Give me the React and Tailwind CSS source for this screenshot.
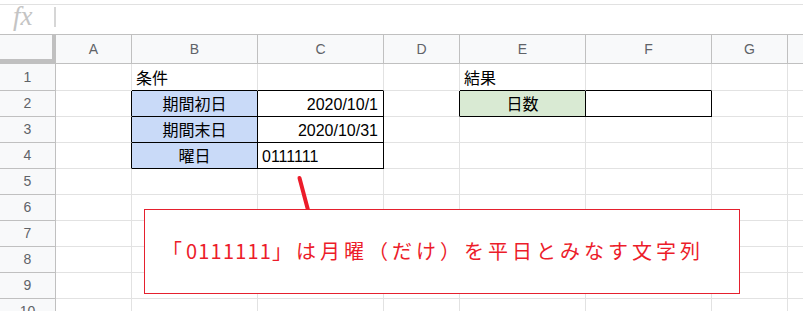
import React from "react";

const cols = [
  { key: "A", w: "w-[76px]" },
  { key: "B", w: "w-[126px]" },
  { key: "C", w: "w-[126px]" },
  { key: "D", w: "w-[76px]" },
  { key: "E", w: "w-[126px]" },
  { key: "F", w: "w-[126px]" },
  { key: "G", w: "w-[76px]" },
  { key: "H", w: "w-[40px]", hide: true },
];

const rowHeights = ["h-[27px]", "h-[26px]", "h-[26px]", "h-[26px]", "h-[26px]", "h-[26px]", "h-[26px]", "h-[26px]", "h-[26px]", "h-[26px]"];

// cell content and styling, keyed by "B2" etc.
const cells = {
  B1: { text: "条件" },
  E1: { text: "結果" },
  B2: { text: "期間初日", align: "center", bg: "bg-[#c9daf8]" },
  C2: { text: "2020/10/1", align: "right" },
  B3: { text: "期間末日", align: "center", bg: "bg-[#c9daf8]" },
  C3: { text: "2020/10/31", align: "right" },
  B4: { text: "曜日", align: "center", bg: "bg-[#c9daf8]" },
  C4: { text: "0111111" },
  E2: { text: "日数", align: "center", bg: "bg-[#d9ead3]" },
};

// black border edges (right / bottom of the named cell)
const blackRight = ["A2", "A3", "A4", "B2", "B3", "B4", "C2", "C3", "C4", "D2", "E2", "F2"];
const blackBottom = ["B1", "C1", "B2", "C2", "B3", "C3", "B4", "C4", "E1", "F1", "E2", "F2"];

function Cell({ id, w }) {
  const c = cells[id] || {};
  const right = blackRight.includes(id) ? "border-r-black" : "border-r-[#e2e2e2]";
  const bottom = blackBottom.includes(id) ? "border-b-black" : "border-b-[#e2e2e2]";
  const align =
    c.align === "center" ? "justify-center" : c.align === "right" ? "justify-end pr-[5px]" : "justify-start pl-[4px]";
  return (
    <div
      className={`${w} h-full shrink-0 flex items-end pb-[1px] border-r border-b ${right} ${bottom} ${c.bg || "bg-white"} ${align}`}
    >
      {c.text && <span className="text-[16px] leading-[21px] text-black whitespace-nowrap">{c.text}</span>}
    </div>
  );
}

export default function App() {
  return (
    <div
      className="relative w-[803px] h-[311px] overflow-hidden bg-white"
      style={{ fontFamily: '"Liberation Sans", "Noto Sans CJK JP", sans-serif' }}
    >
      {/* formula bar */}
      <div className="pt-[4px]">
        <div className="h-[30px] border-t border-[#e1e1e1] flex items-center">
          <div className="w-[54px] pl-[13px] flex items-center">
            <span
              className="text-[27px] italic text-[#c4c4c4] leading-none -mt-[6px]"
              style={{ fontFamily: '"Liberation Serif", serif' }}
            >
              fx
            </span>
          </div>
          <div className="w-[2px] h-[20px] bg-[#d6d6d6] -mt-[6px]"></div>
        </div>
      </div>

      {/* column headers */}
      <div className="flex h-[30px] border-t border-[#c0c0c0]">
        <div className="w-[56px] shrink-0 h-full bg-[#f8f9fa] border-r-4 border-b-[5px] border-[#c0c0c0]"></div>
        {cols.map((col) => (
          <div
            key={col.key}
            className={`${col.w} shrink-0 h-full bg-[#f8f9fa] border-r border-b border-[#c0c0c0] flex items-center justify-center text-[14px] text-[#5f6368]`}
          >
            {col.hide ? "" : col.key}
          </div>
        ))}
      </div>

      {/* rows */}
      {rowHeights.map((h, i) => (
        <div key={i} className={`flex ${h}`}>
          <div className="w-[56px] shrink-0 h-full bg-[#f8f9fa] border-r border-b border-[#c0c0c0] flex items-center justify-center text-[14px] text-[#5f6368]">
            {i + 1}
          </div>
          {cols.map((col) => (
            <Cell key={col.key} id={`${col.key}${i + 1}`} w={col.w} />
          ))}
        </div>
      ))}

      {/* callout pointer */}
      <svg className="absolute left-0 top-0" width="803" height="311">
        <line x1="299.5" y1="178" x2="308" y2="210" stroke="#ec1c2a" strokeWidth="4" strokeLinecap="round" />
      </svg>

      {/* callout box */}
      <div className="absolute left-[144px] top-[209px] w-[596px] h-[85px] bg-white border border-[#e5202e] flex items-center pl-[17px] pb-[2px]">
        <span
          className="text-[20px] text-[#ec1c2a] tracking-[4px] whitespace-nowrap"
          style={{ fontFamily: '"Noto Sans CJK JP", sans-serif' }}
        >
          「<span className="tracking-[1.2px]">0111111</span>」は月曜（だけ）を平日とみなす文字列
        </span>
      </div>
    </div>
  );
}
